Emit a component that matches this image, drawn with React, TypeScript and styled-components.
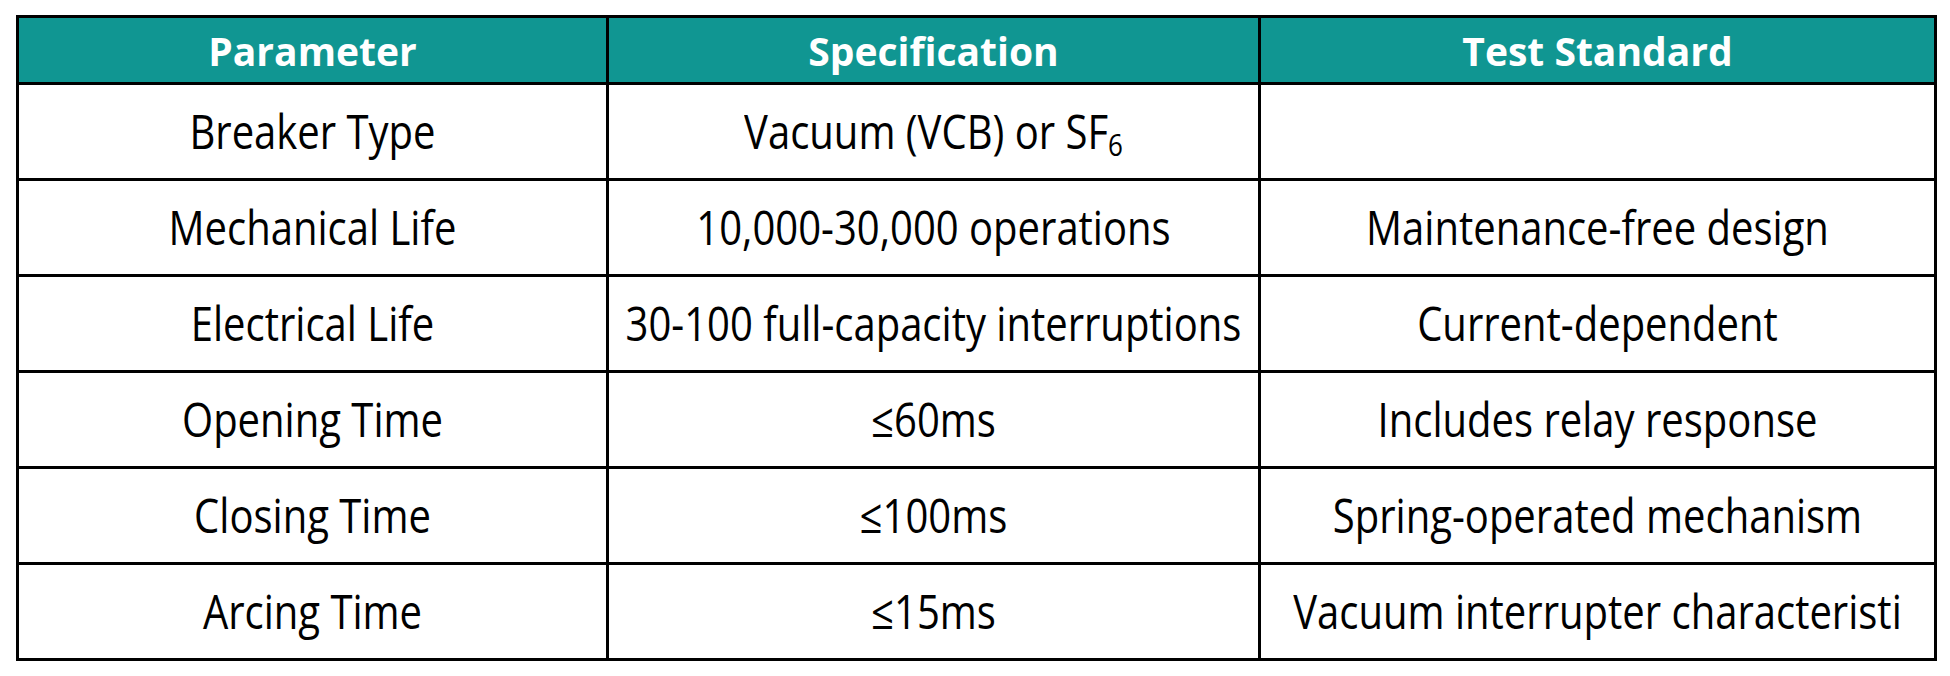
import * as React from 'react'
import styled, { createGlobalStyle } from 'styled-components'

const GlobalStyle = createGlobalStyle`
    html, body {
        margin: 0;
        padding: 0;
        background: #ffffff;
    }
`

const Page = styled.div`
    padding: 15px 16px;
    background: #ffffff;
`

const Table = styled.table`
    width: 1918px;
    border-collapse: collapse;
    table-layout: fixed;
    border: 3px solid #000000;
`

const HeadCell = styled.th`
    height: 64px;
    padding: 0;
    background-color: #109692;
    color: #ffffff;
    border: 3px solid #000000;
    font-family: "Open Sans", "Noto Sans", sans-serif;
    font-weight: 700;
    font-size: 39px;
    line-height: 1;
    text-align: center;
    vertical-align: middle;
`

const Cell = styled.td`
    height: 93px;
    padding: 0;
    border: 3px solid #000000;
    text-align: center;
    vertical-align: middle;
    overflow: hidden;
    white-space: nowrap;
`

const CellText = styled.span`
    display: inline-block;
    font-family: "Open Sans", "Noto Sans", sans-serif;
    font-size: 40px;
    line-height: 1;
    color: #000000;
    transform: scaleY(1.18);
    padding-bottom: 2px;
`

const Sub = styled.sub`
    font-size: 26px;
    vertical-align: -6px;
    line-height: 0;
`

const columns = [
    { title: 'Parameter', width: 590 },
    { title: 'Specification', width: 652 },
    { title: 'Test Standard', width: 676 },
]

const rows: React.ReactNode[][] = [
    ['Breaker Type', <>Vacuum (VCB) or SF<Sub>6</Sub></>, ''],
    ['Mechanical Life', '10,000-30,000 operations', 'Maintenance-free design'],
    ['Electrical Life', '30-100 full-capacity interruptions', 'Current-dependent'],
    ['Opening Time', '≤60ms', 'Includes relay response'],
    ['Closing Time', '≤100ms', 'Spring-operated mechanism'],
    ['Arcing Time', '≤15ms', 'Vacuum interrupter characteristi'],
]

export default function App() {
    return (
        <Page>
            <GlobalStyle />
            <Table>
                <colgroup>
                    {columns.map((c) => (
                        <col key={c.title} style={{ width: c.width }} />
                    ))}
                </colgroup>
                <thead>
                    <tr>
                        {columns.map((c) => (
                            <HeadCell key={c.title}>{c.title}</HeadCell>
                        ))}
                    </tr>
                </thead>
                <tbody>
                    {rows.map((row, i) => (
                        <tr key={i}>
                            {row.map((value, j) => (
                                <Cell key={j}>
                                    <CellText>{value}</CellText>
                                </Cell>
                            ))}
                        </tr>
                    ))}
                </tbody>
            </Table>
        </Page>
    )
}
